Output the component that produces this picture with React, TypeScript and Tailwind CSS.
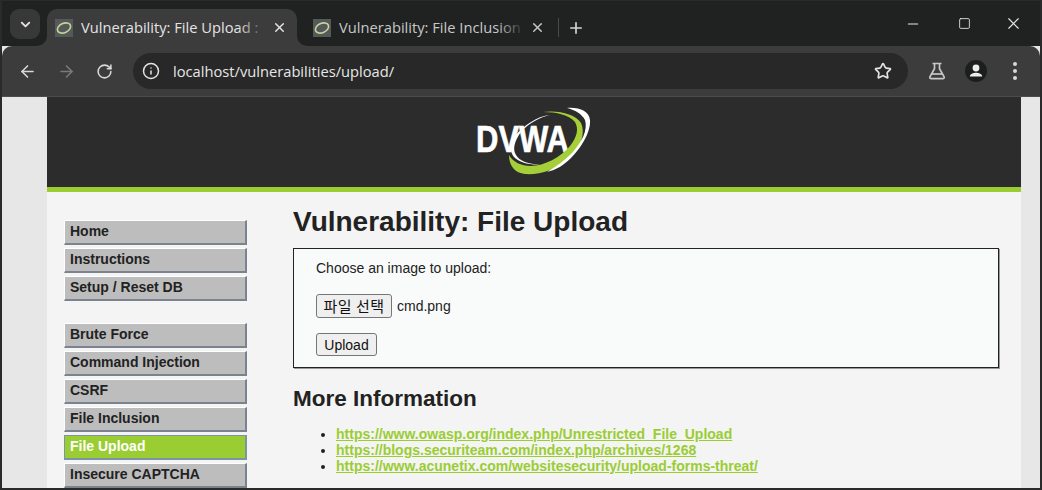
import { ArrowLeft, ArrowRight, ChevronDown, Info, Minus, Plus, RotateCw, Square, Star, X } from "lucide-react";

const menuTop = ["Home", "Instructions", "Setup / Reset DB"];
const menuVulns = ["Brute Force", "Command Injection", "CSRF", "File Inclusion", "File Upload", "Insecure CAPTCHA"];
const links = [
  "https://www.owasp.org/index.php/Unrestricted_File_Upload",
  "https://blogs.securiteam.com/index.php/archives/1268",
  "https://www.acunetix.com/websitesecurity/upload-forms-threat/",
];

const Favicon = () => (
  <svg width="18" height="18" viewBox="0 0 18 18" className="shrink-0">
    <rect width="18" height="18" fill="#56595a" />
    <ellipse cx="9" cy="9" rx="7" ry="4.6" transform="rotate(-25 9 9)" fill="none" stroke="#c3d69b" strokeWidth="1.6" />
  </svg>
);

const Tab = ({ title, active }: { title: string; active?: boolean }) => (
  <div className={`relative flex items-center h-[37px] pl-2 gap-2 rounded-t-[10px] ${active ? "w-[250px] pr-[10px] bg-[#3c3c3c]" : "w-[251px] pr-[11px]"}`}>
    {active && (
      <>
        {/* concave corners where the tab meets the toolbar */}
        <span className="absolute -left-[10px] bottom-0 w-[10px] h-[10px] bg-[#3c3c3c]">
          <span className="block w-full h-full bg-[#202221] rounded-br-[10px]" />
        </span>
        <span className="absolute -right-[10px] bottom-0 w-[10px] h-[10px] bg-[#3c3c3c]">
          <span className="block w-full h-full bg-[#202221] rounded-bl-[10px]" />
        </span>
      </>
    )}
    <Favicon />
    <span className={`flex-1 overflow-hidden whitespace-nowrap text-[14.7px] ${active ? "text-[#e3e3e3]" : "text-[#c7c7c7]"}`}>{title}</span>
    <span className={`absolute right-[31px] top-0 h-full w-[28px] bg-gradient-to-r from-transparent ${active ? "to-[#3c3c3c]" : "to-[#202221]"}`} />
    <X size={15} strokeWidth={2.4} className={active ? "text-[#e3e3e3]" : "text-[#c7c7c7]"} />
  </div>
);

const MenuItem = ({ label, active }: { label: string; active?: boolean }) => (
  <div
    className={`h-[25px] pl-[5px] pb-px flex items-center text-[14px] font-bold border-t border-l border-r-2 border-b-2 ${
      active
        ? "bg-[#9acd32] text-white border-[#7f93a8]"
        : "bg-[#bdbdbd] text-[#222222] border-t-white border-l-white border-r-[#7b8290] border-b-[#7b8290]"
    }`}
  >
    {label}
  </div>
);

const DvwaLogo = () => (
  <svg width="130" height="80" viewBox="0 0 130 80">
    <path d="M81 13C68 14 54 24 46 34 41 42 40 50 46 56 52 61 62 63 71 63 60 62 50 59 47 53 43 47 46 38 52 30 60 21 71 15 81 13Z" fill="#ffffff" />
    <text x="7" y="50" textLength="93" lengthAdjust="spacingAndGlyphs" fill="#ffffff" stroke="#ffffff" strokeWidth="0.6" fontSize="36" fontWeight="700" style={{ fontFamily: '"Liberation Sans", Arial, sans-serif' }}>
      DVWA
    </text>
    <path d="M74 10C90 8 106 12 112 21 117 32 111 47 100 57 88 68 70 73 56 72 46 71 40 64 40 53 44 60 52 64 62 64 75 64 92 55 101 44 108 35 110 27 106 20 100 13 88 10 74 10Z" fill="#a6ce39" />
    <path d="M98 6C110 5 120 9 121 18 122 30 112 46 102 56 95 63 87 68 78 70 88 64 96 58 103 51 113 40 119 28 116 18 113 12 106 8 98 6Z" fill="#ffffff" />
  </svg>
);

const FlaskIcon = () => (
  <svg width="20" height="20" viewBox="0 0 20 20" fill="none" stroke="#c7c7c7" strokeWidth="1.7">
    <path d="M5.500 2.500h9M7.500 2.500v5.200L3 15.600c-.6 1.100.1 2 1.200 2h11.600c1.100 0 1.800-.9 1.200-2l-4.500-7.900V2.500" />
    <path d="M5 13h10" />
  </svg>
);

const ProfileIcon = () => (
  <svg width="22" height="22" viewBox="0 0 22 22">
    <circle cx="11" cy="11" r="11" fill="#1c1d1d" />
    <circle cx="11" cy="8" r="3.400" fill="#ececec" />
    <path d="M4.800 16.500c0-2.600 3.600-3.800 6.200-3.800s6.200 1.200 6.200 3.800z" fill="#ececec" />
  </svg>
);

const App = () => (
  <div className="w-[1042px] h-[490px] flex flex-col overflow-hidden border-x-2 border-t border-b-2 border-[#2a2a2a] bg-[#e7e7e7] font-['Liberation_Sans',Arial,sans-serif]">
    {/* Tab strip */}
    <div className="h-[45px] shrink-0 flex items-end bg-[#202221] font-['Open_Sans',sans-serif]">
      <div className="self-start mt-[8px] ml-[8px] mr-[7px] w-[30px] h-[30px] rounded-[9px] bg-[#383838] flex items-center justify-center">
        <ChevronDown size={15} strokeWidth={3} className="text-[#e3e3e3]" />
      </div>
      <Tab title="Vulnerability: File Upload :" active />
      <div className="self-start mt-[8px] ml-[8px] flex items-center">
        <Tab title="Vulnerability: File Inclusion" />
        <div className="w-px h-[19px] bg-[#4a4a4a] ml-[2px]" />
        <Plus size={18} strokeWidth={2.2} className="ml-[8px] text-[#d6d6d6]" />
      </div>
      <div className="self-start ml-auto flex items-center h-[45px] text-[#e6e6e6]">
        <div className="w-[54px] flex justify-center"><Minus size={16} strokeWidth={1.6} /></div>
        <div className="w-[46px] flex justify-center pl-[2px]"><Square size={13} strokeWidth={1.6} /></div>
        <div className="w-[54px] flex justify-center"><X size={19} strokeWidth={1.4} /></div>
      </div>
    </div>

    {/* Toolbar */}
    <div className="h-[51px] shrink-0 flex items-center bg-[#3c3c3c] rounded-t-[10px] border-b border-[#4c4c4c] pl-[16px] font-['Open_Sans',sans-serif]">
      <ArrowLeft size={19} strokeWidth={2} className="text-[#d8d8d8]" />
      <ArrowRight size={19} strokeWidth={2} className="ml-[20px] text-[#7a7a7a]" />
      <RotateCw size={17} strokeWidth={2.2} className="ml-[20px] text-[#d8d8d8]" />
      <div className="ml-[20px] w-[775px] h-[36px] rounded-full bg-[#282828] flex items-center pl-[9px] pr-[16px]">
        <Info size={18} strokeWidth={2} className="text-[#e3e3e3]" />
        <span className="ml-[13px] text-[14.7px] text-[#e6e6e6]">localhost/vulnerabilities/upload/</span>
        <Star size={18} strokeWidth={2.2} className="ml-auto text-[#e3e3e3]" />
      </div>
      <div className="ml-[19px]"><FlaskIcon /></div>
      <div className="ml-[18px]"><ProfileIcon /></div>
      <div className="ml-[26px] flex flex-col gap-[3px]">
        <span className="w-[4px] h-[4px] rounded-full bg-[#d8d8d8]" />
        <span className="w-[4px] h-[4px] rounded-full bg-[#d8d8d8]" />
        <span className="w-[4px] h-[4px] rounded-full bg-[#d8d8d8]" />
      </div>
    </div>

    {/* Page */}
    <div className="ml-[45px] w-[974px] flex-1 flex flex-col bg-[#f4f4f4] min-h-0">
      <div className="h-[95px] shrink-0 flex items-center justify-center bg-[#2c2c2c] border-b-[5px] border-[#9acd32]">
        <DvwaLogo />
      </div>
      <div className="flex flex-1 min-h-0">
        <div className="w-[183px] ml-[17px] mt-[28px] shrink-0">
          <div className="flex flex-col gap-[3px]">
            {menuTop.map((m) => <MenuItem key={m} label={m} />)}
          </div>
          <div className="flex flex-col gap-[3px] mt-[22px]">
            {menuVulns.map((m) => <MenuItem key={m} label={m} active={m === "File Upload"} />)}
          </div>
        </div>
        <div className="ml-[46px] w-[706px] shrink-0 text-[#222222]">
          <h1 className="mt-[14px] text-[28px] leading-[32px] font-bold">Vulnerability: File Upload</h1>
          <div className="mt-[10px] h-[120px] border border-[#222222] shadow-[1px_1px_0_#999999] bg-[#f9fbfb] pl-[22px] pt-[11px] text-[14px] leading-[16px]">
            <p>Choose an image to upload:</p>
            <div className="mt-[18px] flex items-center h-[24px]">
              <button className="h-[24px] w-[76px] rounded-[3px] border border-[#767676] bg-[#efefef] text-[15px] tracking-[0.5px] text-[#111111] font-['Noto_Sans_CJK_KR','Liberation_Sans',sans-serif]">파일 선택</button>
              <span className="ml-[5px]">cmd.png</span>
            </div>
            <button className="mt-[15px] block h-[23px] w-[61px] rounded-[3px] border border-[#767676] bg-[#efefef] text-[14px] text-[#111111]">Upload</button>
          </div>
          <h2 className="mt-[18px] text-[22.5px] leading-[26px] font-bold">More Information</h2>
          <ul className="mt-[14px] list-disc pl-[43px] text-[14px] leading-[16px] font-bold">
            {links.map((l) => (
              <li key={l}><a href={l} className="text-[#9acd32] underline">{l}</a></li>
            ))}
          </ul>
        </div>
      </div>
    </div>
  </div>
);

export default App;
